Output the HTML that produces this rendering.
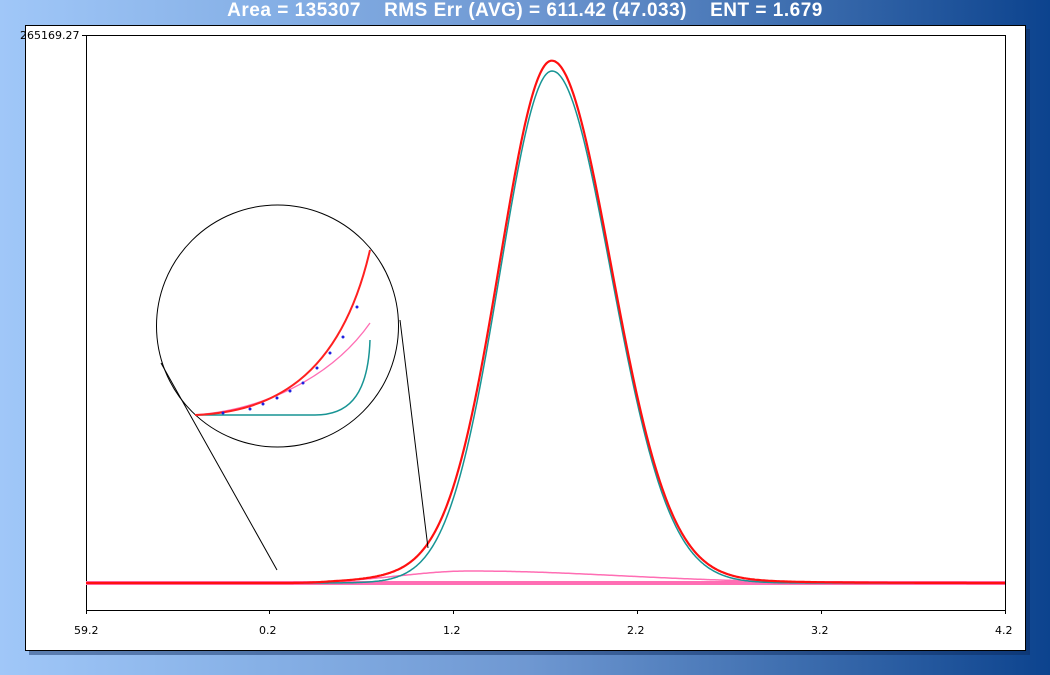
<!DOCTYPE html>
<html><head><meta charset="utf-8"><style>
html,body{margin:0;padding:0;}
body{width:1050px;height:675px;overflow:hidden;position:relative;
background:linear-gradient(to right,#a0c7f8 0%,#86b0e6 25%,#6f98d2 50%,#3f6fb0 75%,#0c438e 100%);
font-family:"DejaVu Sans","Liberation Sans",sans-serif;}
.title{position:absolute;left:0;width:1050px;top:0;text-align:center;color:#fff;font:bold 19px "Liberation Sans",sans-serif;letter-spacing:0.5px;white-space:pre;line-height:22px;}
.shadow{position:absolute;left:29px;top:29px;width:1001px;height:626px;background:rgba(10,40,90,0.45);}
.panel{position:absolute;left:25px;top:25px;width:999px;height:624px;background:#fff;border:1px solid #000;}
svg{position:absolute;left:0;top:0;}
.lbl{font-size:11px;fill:#000;}
</style></head><body>
<div class="title">Area = 135307    RMS Err (AVG) = 611.42 (47.033)    ENT = 1.679</div>
<div class="shadow"></div>
<div class="panel"></div>
<svg width="1050" height="675" viewBox="0 0 1050 675">
<text x="20" y="39" class="lbl">265169.27</text>
<path d="M82 35.5H1005.5V614M86.5 35V614M86 610.5H1005.5" fill="none" stroke="#000" stroke-width="1"/>
<path d="M269.5 610V614M453.5 610V614M637.5 610V614M821.5 610V614" stroke="#000"/>
<text x="74" y="634" class="lbl">59.2</text>
<text x="259" y="634" class="lbl">0.2</text>
<text x="443" y="634" class="lbl">1.2</text>
<text x="627" y="634" class="lbl">2.2</text>
<text x="811" y="634" class="lbl">3.2</text>
<text x="995" y="634" class="lbl">4.2</text>
<g id="curves"></g>
<circle cx="277.5" cy="326" r="121" fill="none" stroke="#000" stroke-width="1"/>
<path d="M161 363L277 570M400 320L428 548" stroke="#000" fill="none"/>
<path d="M195 415C260 410 330 380 370 323" stroke="#ff6eb4" fill="none" stroke-width="1.3"/>
<path d="M195 415H315C345 415 368 400 370 340" stroke="#179494" fill="none" stroke-width="1.5"/>
<path d="M195 415C270 412 340 380 370 250" stroke="#ff2020" fill="none" stroke-width="2"/>
<g fill="#2020e0">
<circle cx="223" cy="413" r="1.5"/><circle cx="250" cy="409" r="1.5"/><circle cx="263" cy="404" r="1.5"/><circle cx="277" cy="398" r="1.5"/><circle cx="290" cy="391" r="1.5"/><circle cx="303" cy="383" r="1.5"/><circle cx="317" cy="368" r="1.5"/><circle cx="330" cy="353" r="1.5"/><circle cx="343" cy="337" r="1.5"/><circle cx="357" cy="307" r="1.5"/>
</g>
</svg>
<script>
var base=583,H=512,c=552,sl=52,sr=59;
function teal(x){var s=x<c?sl:sr;return H*Math.exp(-((x-c)*(x-c))/(2*s*s));}
function pink(x){if(x<290)return 0;var d=x-470,s=d<0?70:150;return 12*Math.exp(-d*d/(2*s*s))*(x<330?(x-290)/40:1);}
var t="",p="",r="";
for(var x=86;x<=1005;x+=1){
 var tv=teal(x),pv=pink(x);
 t+=(x==86?"M":"L")+x+" "+(base-tv).toFixed(1);
 p+=(x==86?"M":"L")+x+" "+(base-pv).toFixed(1);
 r+=(x==86?"M":"L")+x+" "+(base-tv-pv).toFixed(1);
}
document.getElementById("curves").innerHTML=
'<path d="M86 583H1005" stroke="#ff6eb4" stroke-width="4"/>'+
'<path d="'+p+'" fill="none" stroke="#ff6eb4" stroke-width="1.5"/>'+
'<path d="'+t+'" fill="none" stroke="#179494" stroke-width="1.5"/>'+
'<path d="'+r+'" fill="none" stroke="#ff1010" stroke-width="2.2"/>';
</script>
</body></html>
